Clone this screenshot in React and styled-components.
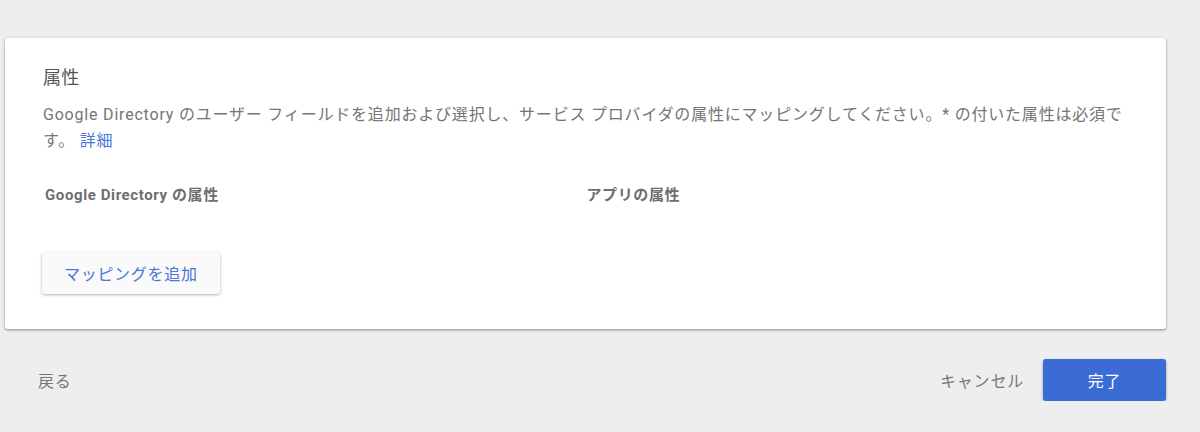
import React from "react";
import styled, { createGlobalStyle } from "styled-components";

const GlobalStyle = createGlobalStyle`
  html, body {
    margin: 0;
    padding: 0;
    background: #eeeeee;
    font-family: Roboto, "Noto Sans CJK JP", "Noto Sans", sans-serif;
  }
`;

const Page = styled.div`
  padding: 38px 34px 0 5px;
`;

const Card = styled.section`
  background: #fff;
  border-radius: 3px;
  box-shadow: 0 1px 2px rgba(0, 0, 0, 0.3), 0 1px 3px 1px rgba(0, 0, 0, 0.1);
  padding: 28px 38px 35px 38px;
`;

const Title = styled.h2`
  margin: 0;
  font-size: 18px;
  line-height: 24px;
  font-weight: 400;
  color: #555;
  letter-spacing: 0.3px;
`;

const Description = styled.p`
  margin: 12px 0 0;
  font-size: 16px;
  line-height: 26px;
  letter-spacing: 0.8px;
  color: #757575;
`;

const Link = styled.a`
  color: #4a76d6;
  text-decoration: none;
`;

const Columns = styled.div`
  display: grid;
  grid-template-columns: 1fr 1fr;
  margin-top: 31px;
  padding-left: 2px;
`;

const ColumnHeader = styled.div`
  font-size: 15px;
  line-height: 20px;
  font-weight: 700;
  letter-spacing: 0.6px;
  color: #6e6e6e;
`;

const RaisedButton = styled.button`
  margin-top: 47px;
  margin-left: -1px;
  height: 42px;
  padding: 0 22px;
  border: none;
  border-radius: 3px;
  background: #fafafa;
  box-shadow: 0 1px 3px rgba(0, 0, 0, 0.3);
  font-family: inherit;
  font-size: 16px;
  letter-spacing: 0.7px;
  color: #4a76d6;
  cursor: pointer;
`;

const Footer = styled.div`
  display: flex;
  align-items: center;
  margin-top: 30px;
  padding-left: 33px;
`;

const TextButton = styled.button`
  border: none;
  background: none;
  padding: 0;
  font-family: inherit;
  font-size: 16px;
  letter-spacing: 0.8px;
  color: #777;
  cursor: pointer;
`;

const Actions = styled.div`
  margin-left: auto;
  display: flex;
  align-items: center;
  gap: 19px;
`;

const PrimaryButton = styled.button`
  width: 123px;
  height: 42px;
  border: none;
  border-radius: 3px;
  background: #3b6bd4;
  box-shadow: 0 1px 3px rgba(0, 0, 0, 0.35);
  color: #fff;
  font-family: inherit;
  font-size: 16px;
  letter-spacing: 0.7px;
  cursor: pointer;
`;

export default function App() {
  return (
    <>
      <GlobalStyle />
      <Page>
        <Card>
          <Title>属性</Title>
          <Description>
            Google Directory のユーザー フィールドを追加および選択し、サービス プロバイダの属性にマッピングしてください。* の付いた属性は必須です。{" "}
            <Link href="#">詳細</Link>
          </Description>
          <Columns>
            <ColumnHeader>Google Directory の属性</ColumnHeader>
            <ColumnHeader>アプリの属性</ColumnHeader>
          </Columns>
          <RaisedButton>マッピングを追加</RaisedButton>
        </Card>
        <Footer>
          <TextButton>戻る</TextButton>
          <Actions>
            <TextButton>キャンセル</TextButton>
            <PrimaryButton>完了</PrimaryButton>
          </Actions>
        </Footer>
      </Page>
    </>
  );
}
